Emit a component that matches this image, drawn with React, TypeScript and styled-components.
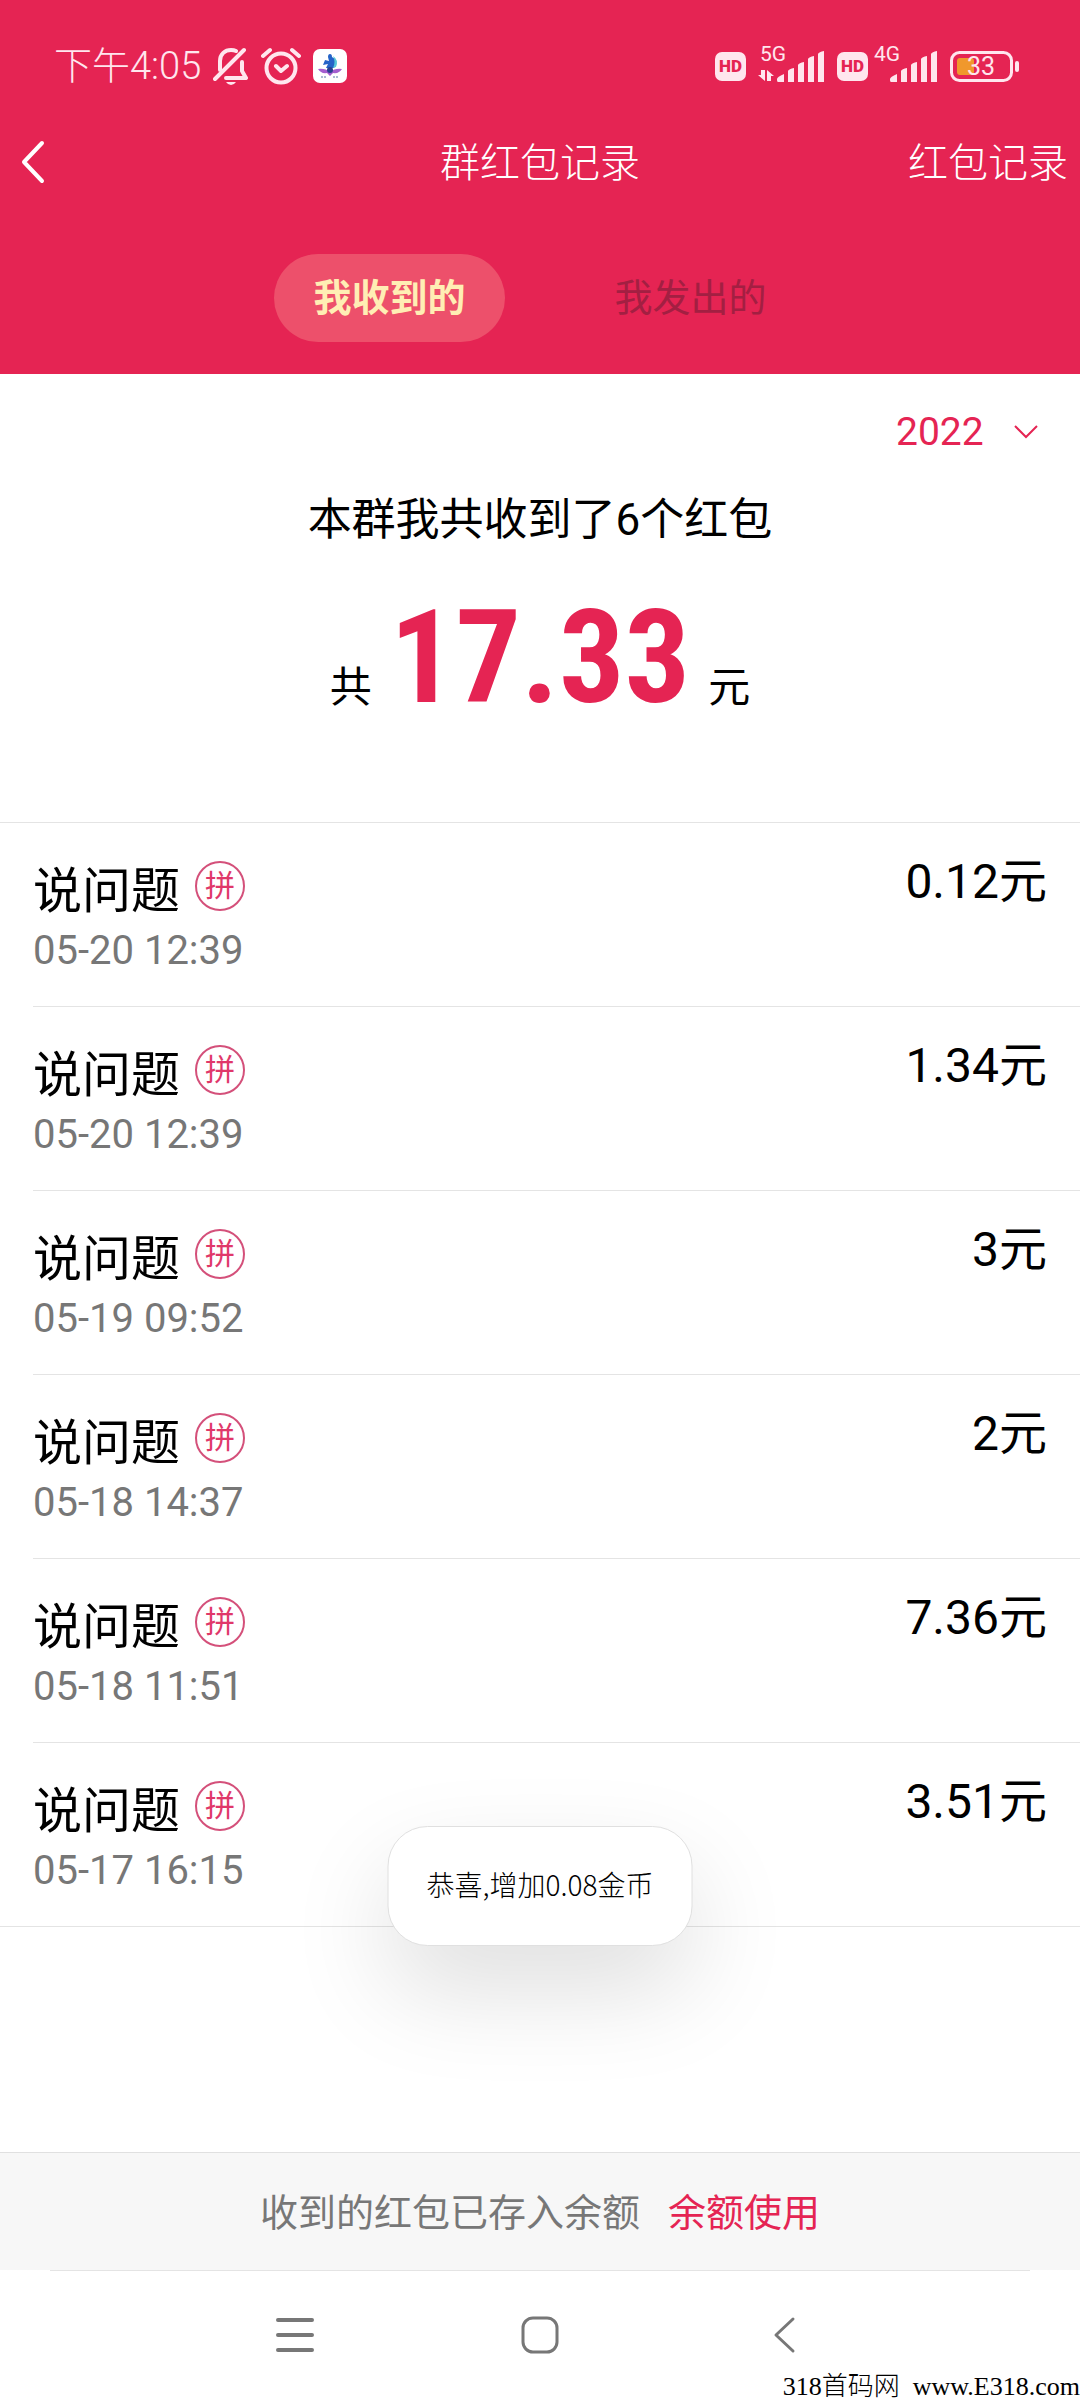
import React from "react";
import styled, { createGlobalStyle } from "styled-components";

const CJK = `"Noto Sans CJK SC", sans-serif`;
const RED = "#e52453";

const GlobalStyle = createGlobalStyle`
  *, *::before, *::after { box-sizing: border-box; }
  body { margin: 0; background: #fff; }
  button, select { font: inherit; color: inherit; background: none; border: 0; padding: 0; cursor: pointer; }
  h1, h2, p, ul { margin: 0; padding: 0; font-weight: inherit; font-size: inherit; }
  svg { display: block; flex: none; }
`;

const Screen = styled.div`
  position: relative;
  display: flex;
  flex-direction: column;
  min-height: 100vh;
  background: #fff;
  color: #000;
  font-family: Roboto, ${CJK};
`;

const Header = styled.header`
  background: ${RED};
  color: #fff;
  padding-bottom: 32px;
`;

const StatusBar = styled.div`
  display: flex;
  justify-content: space-between;
  align-items: center;
  height: 132px;
  padding: 0 60px 0 54px;
  color: #ffe6ee;
`;

const StatusGroup = styled.div<{ $gap: number }>`
  display: flex;
  align-items: center;
  gap: ${(p) => p.$gap}px;
`;

const Clock = styled.span`
  font-size: 38px;
  line-height: 44px;
  font-weight: 300;
`;

const HdBadge = styled.span`
  width: 31px;
  height: 29px;
  border-radius: 7px;
  background: #ffe6ee;
  color: ${RED};
  font: 900 17px/29px Roboto, sans-serif;
  text-align: center;
`;

const SignalBox = styled.span<{ $width: number }>`
  position: relative;
  display: flex;
  justify-content: flex-end;
  width: ${(p) => p.$width}px;
`;

const NetLabel = styled.span<{ $left: number }>`
  position: absolute;
  top: -9px;
  left: ${(p) => p.$left}px;
  font-size: 21px;
  line-height: 24px;
`;

const BatteryBox = styled.span`
  position: relative;
  display: block;
`;

const BatteryText = styled.span`
  position: absolute;
  inset: 0 8px 0 0;
  text-align: center;
  font-size: 25px;
  line-height: 31px;
`;

const TitleBar = styled.div`
  display: grid;
  grid-template-columns: 1fr auto 1fr;
  align-items: center;
  height: 56px;
  padding: 0 12px;
  font: 300 40px/56px ${CJK};
`;

const BackButton = styled.button`
  justify-self: start;
  display: flex;
  && { padding: 4px 8px 0; }
`;

const HistoryLink = styled.a`
  justify-self: end;
  color: inherit;
  text-decoration: none;
`;

const Tabs = styled.div`
  display: flex;
  justify-content: center;
  gap: 70px;
  margin-top: 66px;
`;

const Tab = styled.button<{ $active?: boolean }>`
  width: 231px;
  height: 88px;
  border-radius: 44px;
  && {
    padding-bottom: 6px;
    font: ${(p) => (p.$active ? 700 : 400)} 38px/60px ${CJK};
    color: ${(p) => (p.$active ? "#ffeeb4" : "#a31f42")};
    background: ${(p) => (p.$active ? "#ed506b" : "transparent")};
  }
`;

const Summary = styled.section`
  display: flex;
  flex-direction: column;
  align-items: center;
  height: 448px;
`;

const YearPicker = styled.label`
  align-self: flex-end;
  display: flex;
  align-items: center;
  gap: 30px;
  padding: 34px 42px 0 0;
  color: ${RED};
`;

const YearSelect = styled.select`
  && {
    appearance: none;
    font-size: 39px;
    line-height: 48px;
    height: 48px;
    outline: 0;
  }
`;

const CountLine = styled.p`
  margin-top: 34px;
  font-size: 44px;
  line-height: 60px;
`;

const TotalLine = styled.p`
  display: flex;
  align-items: baseline;
  gap: 18px;
  margin-top: 28px;
  font-size: 42px;
  line-height: 160px;
`;

const Total = styled.strong`
  color: ${RED};
  font: 700 130px/160px "Roboto Condensed", Roboto, sans-serif;
`;

const List = styled.ul`
  list-style: none;
  border-top: 1px solid #e4e4e4;
`;

const Row = styled.li`
  display: flex;
  justify-content: space-between;
  height: 184px;
  margin-left: 33px;
  padding: 29px 33px 0 0;
  border-bottom: 1px solid #e4e4e4;
  &:last-child {
    margin-left: 0;
    padding-left: 33px;
  }
`;

const NameLine = styled.div`
  display: flex;
  align-items: center;
  gap: 15px;
  height: 68px;
  font-size: 49px;
`;

const Badge = styled.span`
  width: 50px;
  height: 50px;
  border: 2px solid #d4507a;
  border-radius: 50%;
  color: #e0386a;
  font-size: 30px;
  line-height: 46px;
  text-align: center;
`;

const DateText = styled.time`
  display: block;
  color: #777;
  font-size: 40px;
  line-height: 62px;
`;

const Amount = styled.span`
  font-size: 48px;
  line-height: 60px;
`;

const Footer = styled.footer`
  display: flex;
  justify-content: center;
  align-items: center;
  gap: 28px;
  height: 118px;
  margin-top: auto;
  padding-bottom: 4px;
  border-top: 1px solid #e0e0e0;
  background: #f7f7f7;
  color: #777;
  font-size: 38px;
`;

const BalanceLink = styled.a`
  color: ${RED};
  text-decoration: none;
`;

const NavBar = styled.nav`
  display: flex;
  justify-content: center;
  gap: 205px;
  height: 130px;
  margin: 0 50px;
  padding-top: 44px;
  border-top: 1px solid #e4e4e4;
`;

const NavButton = styled.button`
  width: 40px;
  height: 40px;
`;

const Toast = styled.div`
  position: absolute;
  left: 50%;
  bottom: 454px;
  transform: translateX(-50%);
  padding: 0 38px 4px;
  border: 1px solid #e0e0e0;
  border-radius: 40px;
  background: #fff;
  box-shadow: 0 44px 100px rgba(0, 0, 0, 0.13);
  font: 300 28px/114px ${CJK};
  white-space: nowrap;
`;

const Watermark = styled.p`
  position: absolute;
  right: 0;
  bottom: 0;
  font: 300 26px/26px "Liberation Serif", ${CJK};
  white-space: pre;
`;

const SignalBars = () => (
  <svg width="48" height="31" viewBox="0 0 48 31" fill="currentColor">
    <path d="M0 28q0-2 7-5v8H1q-1 0-1-2zM11 20q1-2 6-3v14h-6zM21 14q1-2 6-3v20h-6zM31 8q1-2 6-3v26h-6zM41 3q1-2 6-3v31h-6z" />
  </svg>
);

const records = [
  ["05-20 12:39", "0.12"],
  ["05-20 12:39", "1.34"],
  ["05-19 09:52", "3"],
  ["05-18 14:37", "2"],
  ["05-18 11:51", "7.36"],
  ["05-17 16:15", "3.51"],
];

export default function App() {
  return (
    <Screen>
      <GlobalStyle />
      <Header>
        <StatusBar>
          <StatusGroup $gap={12}>
            <Clock>下午4:05</Clock>
            <svg width="36" height="38" viewBox="0 0 36 38" fill="none" stroke="currentColor" strokeWidth="4" strokeLinecap="round" strokeLinejoin="round">
              <path d="M2 32 31 3M7 23V14C7 7 12 3 18 3q3 0 5 1M29 15v9l4 7H13" />
              <path d="M13 35h10q-2 3-5 3t-5-3z" fill="currentColor" stroke="none" />
            </svg>
            <svg width="40" height="38" viewBox="0 0 40 38" fill="none" stroke="currentColor" strokeWidth="4" strokeLinecap="round" strokeLinejoin="round">
              <circle cx="20" cy="21" r="14.5" />
              <path d="M2 9l7-6M38 9l-7-6M15 19l5 5 6-5" />
            </svg>
            <svg width="34" height="34" viewBox="0 0 34 34">
              <rect width="34" height="34" rx="7" fill="#fff" />
              <path d="M15 8q0-3 2-3t2 3l3 2 1 5-2 4h-8l2-4-5 1 2-5 4 1z" fill="#2563c8" />
              <path d="M20 7q6 4 3 11l-3 1q3-6 0-12z" fill="#55c8d8" />
              <path d="M5 20q7-1 12 3 5-4 12-3-3 5-9 4l-3 3-3-3q-6 1-9-4z" fill="#a45fcf" />
              <circle cx="17" cy="21" r="3" fill="#28408f" />
              <path d="M8 28h6M20 28h6" stroke="#5577a5" strokeDasharray="2 1" />
            </svg>
          </StatusGroup>
          <StatusGroup $gap={12}>
            <HdBadge>HD</HdBadge>
            <SignalBox $width={67}>
              <NetLabel $left={2}>5G</NetLabel>
              <svg width="19" height="31" viewBox="0 0 19 31" fill="currentColor">
                <path d="M7 19v11L0 24h3v-5zM9 30V19l7 6h-3v5z" />
              </svg>
              <SignalBars />
            </SignalBox>
            <HdBadge>HD</HdBadge>
            <SignalBox $width={58}>
              <NetLabel $left={-6}>4G</NetLabel>
              <SignalBars />
            </SignalBox>
            <BatteryBox>
              <svg width="70" height="31" viewBox="0 0 70 31">
                <rect x="1.5" y="1.5" width="60" height="28" rx="8" fill="none" stroke="currentColor" strokeWidth="3" />
                <rect x="7" y="7" width="17" height="17" rx="3" fill="#f0982c" />
                <rect x="65" y="10" width="4" height="11" rx="2" fill="currentColor" />
              </svg>
              <BatteryText>33</BatteryText>
            </BatteryBox>
          </StatusGroup>
        </StatusBar>
        <TitleBar>
          <BackButton aria-label="返回">
            <svg width="26" height="44" viewBox="0 0 26 44" fill="none" stroke="currentColor" strokeWidth="4" strokeLinecap="round" strokeLinejoin="round">
              <path d="M22 3 4 22l18 19" />
            </svg>
          </BackButton>
          <h1>群红包记录</h1>
          <HistoryLink href="#history">红包记录</HistoryLink>
        </TitleBar>
        <Tabs role="tablist">
          <Tab role="tab" aria-selected="true" $active>我收到的</Tab>
          <Tab role="tab" aria-selected="false">我发出的</Tab>
        </Tabs>
      </Header>

      <Summary>
        <YearPicker>
          <YearSelect aria-label="年份" defaultValue="2022">
            <option>2022</option>
          </YearSelect>
          <svg width="24" height="16" viewBox="0 0 24 16" fill="none" stroke="currentColor" strokeWidth="2">
            <path d="M1 2l11 11L23 2" />
          </svg>
        </YearPicker>
        <CountLine>本群我共收到了6个红包</CountLine>
        <TotalLine>
          <span>共</span>
          <Total>17.33</Total>
          <span>元</span>
        </TotalLine>
      </Summary>

      <List>
        {records.map(([date, amount], i) => (
          <Row key={i}>
            <div>
              <NameLine>
                <span>说问题</span>
                <Badge>拼</Badge>
              </NameLine>
              <DateText>{date}</DateText>
            </div>
            <Amount>{amount}元</Amount>
          </Row>
        ))}
      </List>

      <Footer>
        <span>收到的红包已存入余额</span>
        <BalanceLink href="#balance">余额使用</BalanceLink>
      </Footer>
      <NavBar>
        <NavButton aria-label="最近任务">
          <svg width="40" height="40" viewBox="0 0 40 40" stroke="#777" strokeWidth="4" strokeLinecap="round">
            <path d="M3 5h34M3 20h34M3 35h34" />
          </svg>
        </NavButton>
        <NavButton aria-label="主屏幕">
          <svg width="40" height="40" viewBox="0 0 40 40" fill="none" stroke="#777" strokeWidth="3">
            <rect x="3" y="3" width="34" height="34" rx="10" />
          </svg>
        </NavButton>
        <NavButton aria-label="返回上一页">
          <svg width="40" height="40" viewBox="0 0 40 40" fill="none" stroke="#777" strokeWidth="3" strokeLinecap="round" strokeLinejoin="round">
            <path d="M28 4 11 20l17 16" />
          </svg>
        </NavButton>
      </NavBar>

      <Toast role="status">恭喜,增加0.08金币</Toast>
      <Watermark>318首码网  www.E318.com</Watermark>
    </Screen>
  );
}
